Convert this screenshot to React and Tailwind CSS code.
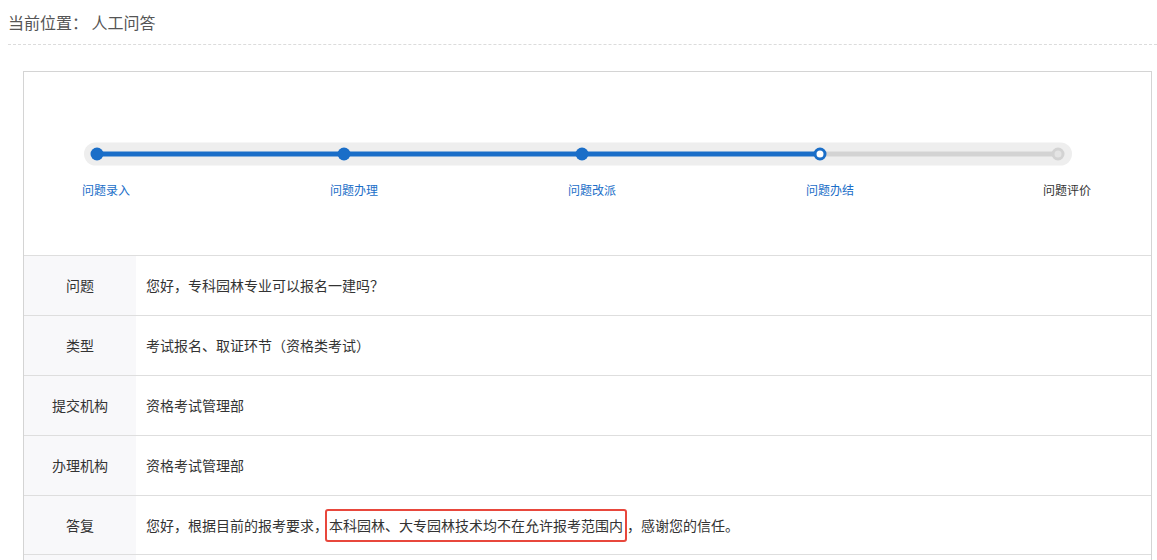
const steps = [
  { label: "问题录入", width: "w-[248px]", active: true },
  { label: "问题办理", width: "w-[238px]", active: true },
  { label: "问题改派", width: "w-[238px]", active: true },
  { label: "问题办结", width: "w-[237px]", active: true },
  { label: "问题评价", width: "w-[80px]", active: false },
];

const rows = [
  { label: "问题", value: "您好，专科园林专业可以报名一建吗？" },
  { label: "类型", value: "考试报名、取证环节（资格类考试）" },
  { label: "提交机构", value: "资格考试管理部" },
  { label: "办理机构", value: "资格考试管理部" },
];

function ProgressTrack() {
  // dot centres relative to the card's inner left edge (x=24)
  const dots = [73, 320, 558, 796, 1034];
  return (
    <svg width="1127" height="24" className="block">
      <rect x="60" y="0.5" width="988" height="23" rx="11.5" fill="#eeeeee" />
      <line x1="796" y1="12" x2="1034" y2="12" stroke="#d3d3d3" strokeWidth="5" />
      <line x1="73" y1="12" x2="796" y2="12" stroke="#1a6ec8" strokeWidth="5" />
      {dots.slice(0, 3).map((x) => (
        <circle key={x} cx={x} cy="12" r="6.5" fill="#1a6ec8" />
      ))}
      <circle cx="796" cy="12" r="5" fill="#ffffff" stroke="#1a6ec8" strokeWidth="3" />
      <circle cx="1034" cy="12" r="5" fill="#e4e4e4" stroke="#d3d3d3" strokeWidth="3" />
    </svg>
  );
}

export default function App() {
  return (
    <div className="min-h-[560px] bg-white pl-2 font-['Noto_Sans_CJK_SC','Microsoft_YaHei',sans-serif] text-[#333]">
      <div className="flex h-[45px] items-center border-b border-dashed border-[#dcdcdc] text-[16px] text-[#555]">
        当前位置：&nbsp;人工问答
      </div>

      <div className="ml-[15px] mr-[5px] mt-[26px] border border-[#d4d4d4]">
        <div className="h-[183px] pt-[70px]">
          <ProgressTrack />
          <div className="mt-[16px] flex pl-[58px] text-[12px] leading-4">
            {steps.map((s) => (
              <div
                key={s.label}
                className={`${s.width} shrink-0 ${s.active ? "text-[#1a6ec8]" : "text-[#333]"}`}
              >
                {s.label}
              </div>
            ))}
          </div>
        </div>

        {rows.map((r) => (
          <div key={r.label} className="flex h-[60px] border-t border-[#dedede] text-[14px]">
            <div className="flex w-[112px] shrink-0 items-center justify-center bg-[#f8f8fa]">
              {r.label}
            </div>
            <div className="flex items-center pl-[10px]">{r.value}</div>
          </div>
        ))}

        <div className="flex h-[60px] border-t border-b border-[#dedede] text-[14px]">
          <div className="flex w-[112px] shrink-0 items-center justify-center bg-[#f8f8fa]">
            答复
          </div>
          <div className="flex items-center pl-[10px]">
            您好，根据目前的报考要求，
            <span className="-ml-[3px] rounded-[3px] border-2 border-[#e8473c] px-[2px] py-[4px]">
              本科园林、大专园林技术均不在允许报考范围内
            </span>
            ，感谢您的信任。
          </div>
        </div>
        <div className="flex h-[60px] text-[14px]">
          <div className="w-[112px] shrink-0 bg-[#f8f8fa]" />
        </div>
      </div>
    </div>
  );
}
